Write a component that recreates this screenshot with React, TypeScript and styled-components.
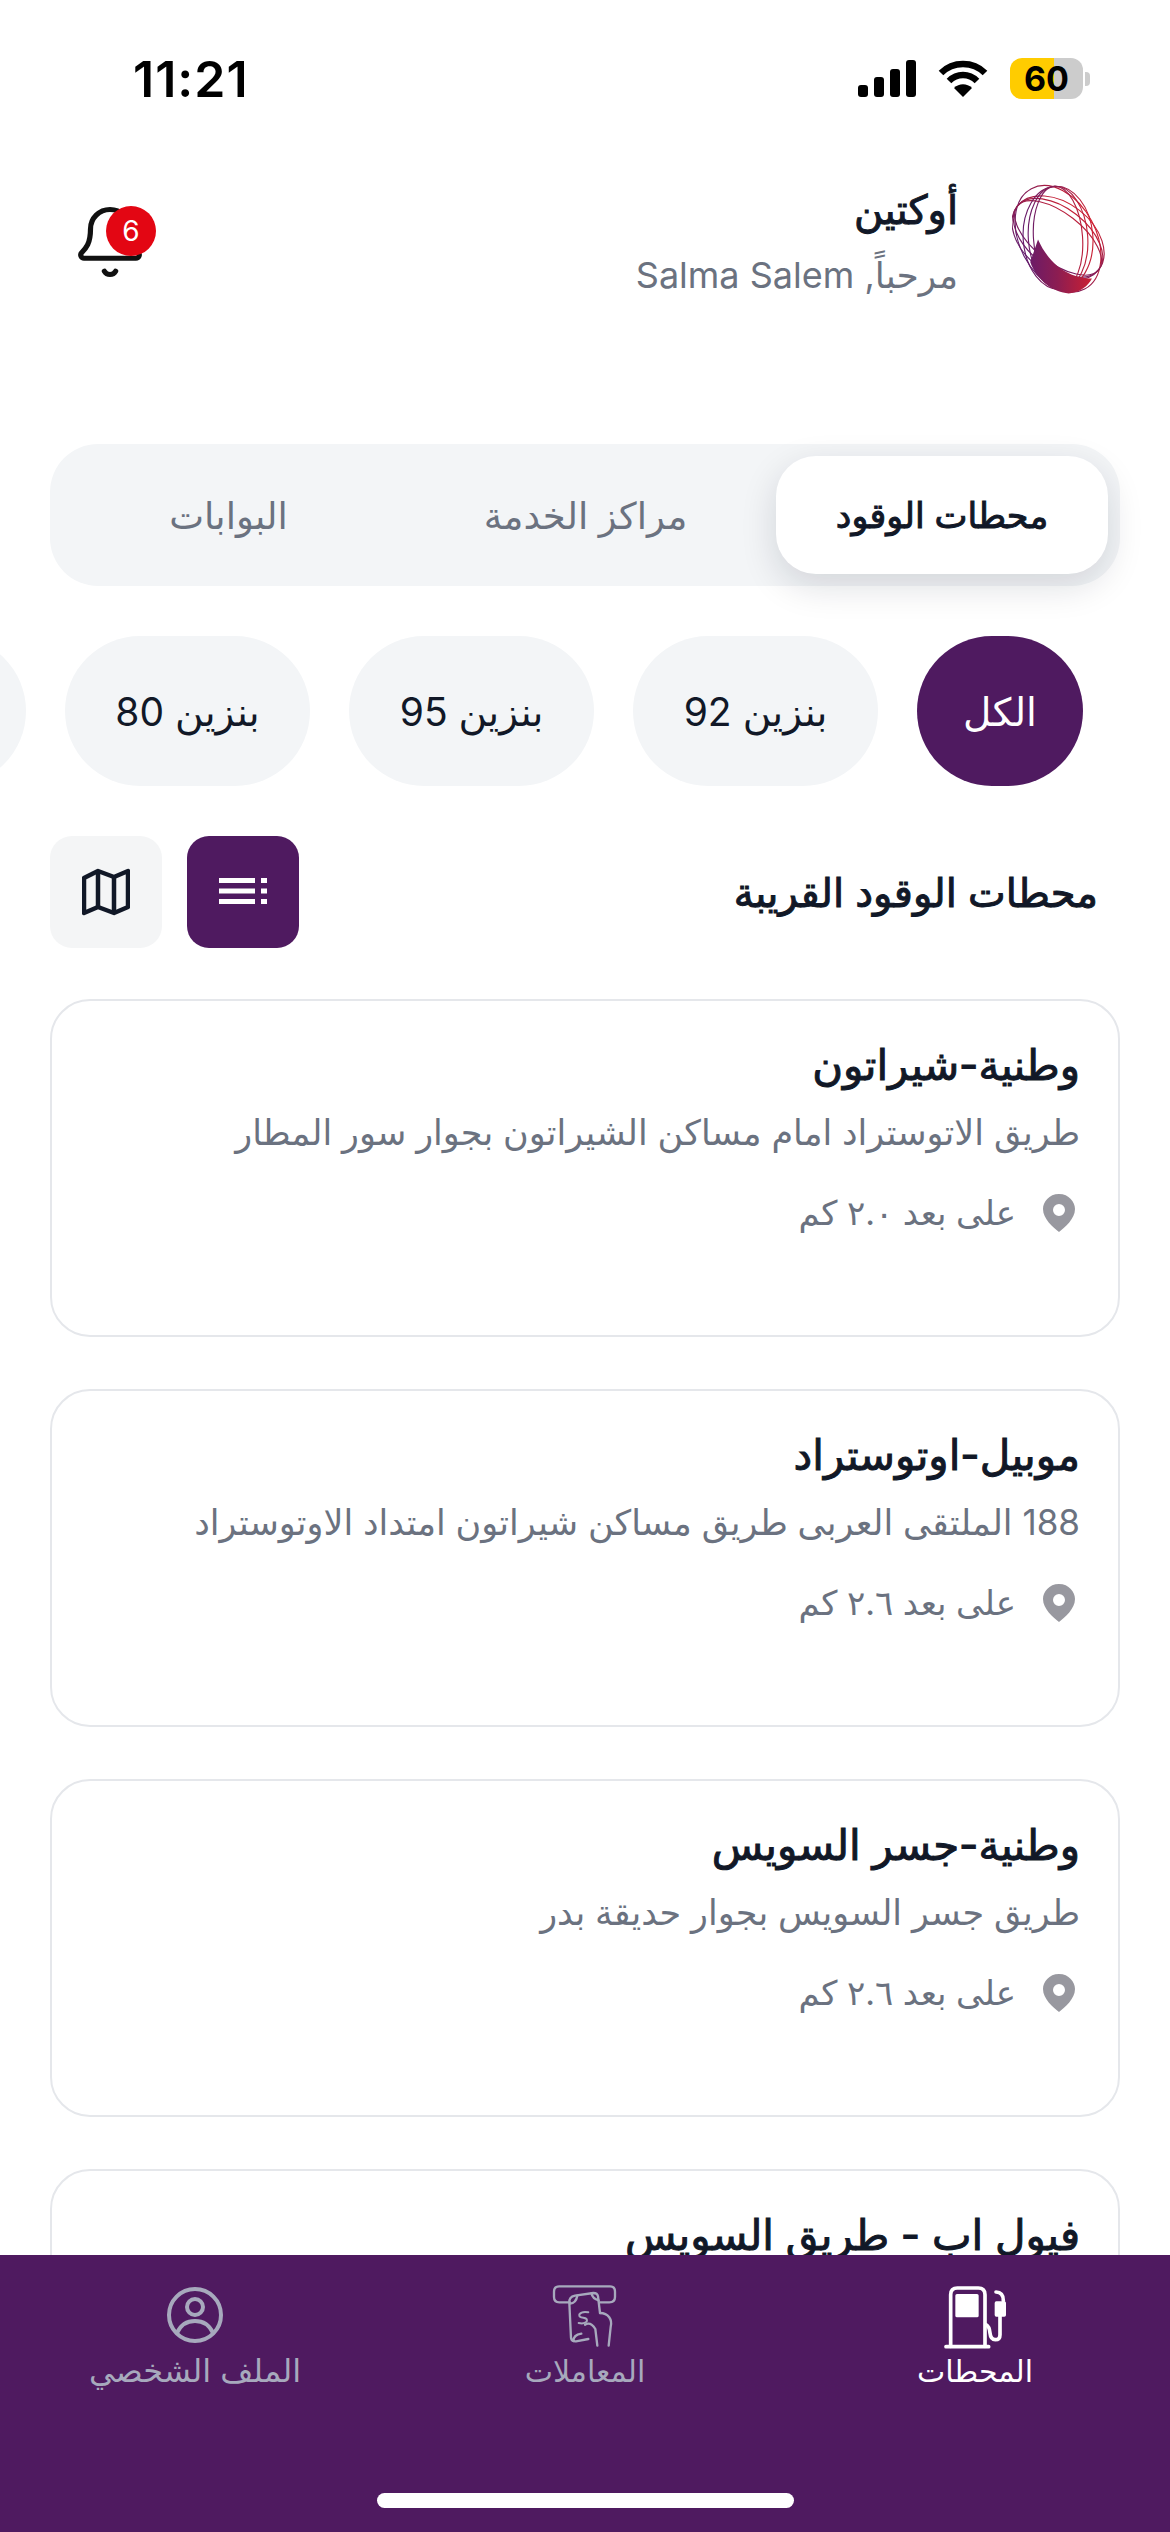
import styled, { createGlobalStyle, css } from 'styled-components';
import { Bell } from 'lucide-react';

const PURPLE = '#4f1a60';
const INK = '#111827';
const GRAY = '#6b7280';

const stations = [
  {
    name: 'وطنية-شيراتون',
    address: 'طريق الاتوستراد امام مساكن الشيراتون بجوار سور المطار',
    distance: 'على بعد ٢.٠ كم',
  },
  {
    name: 'موبيل-اوتوستراد',
    address: '188 الملتقى العربى طريق مساكن شيراتون امتداد الاوتوستراد',
    distance: 'على بعد ٢.٦ كم',
  },
  {
    name: 'وطنية-جسر السويس',
    address: 'طريق جسر السويس بجوار حديقة بدر',
    distance: 'على بعد ٢.٦ كم',
  },
  {
    name: 'فيول اب - طريق السويس',
    address: '',
    distance: '',
  },
];

const chips = ['الكل', 'بنزين 92', 'بنزين 95', 'بنزين 80'];

// DejaVu's real bold is far wider than the reference face, so thicken the regular cut
const heavyText = css`
  font-weight: 400;
  -webkit-text-stroke: 1px currentColor;
`;

const GlobalStyle = createGlobalStyle`
  html, body {
    margin: 0;
    padding: 0;
    background: #fff;
  }
  body {
    font-family: Inter, "DejaVu Sans", sans-serif;
  }
`;

const Screen = styled.div`
  width: 1170px;
  height: 2532px;
  display: flex;
  flex-direction: column;
  overflow: hidden;
  background: #fff;
  direction: rtl;
`;

const StatusBar = styled.div`
  direction: ltr;
  height: 157px;
  flex: none;
  padding: 0 80px 0 133px;
  box-sizing: border-box;
  display: flex;
  align-items: center;
  justify-content: space-between;
`;

const Clock = styled.span`
  font-size: 50px;
  font-weight: 600;
  color: #000;
  letter-spacing: 1px;
`;

const StatusIcons = styled.div`
  display: flex;
  align-items: center;
  gap: 22px;
`;

const Battery = styled.div`
  width: 73px;
  height: 41px;
  border-radius: 12px;
  overflow: hidden;
  background: linear-gradient(90deg, #ffcc00 0 44px, #cccccc 44px);
  display: flex;
  align-items: center;
  justify-content: center;
  font-size: 34px;
  font-weight: 700;
  color: #000;
`;

const BatteryWrap = styled.div`
  display: flex;
  align-items: center;
  gap: 2px;
`;

const BatteryNub = styled.div`
  width: 5px;
  height: 14px;
  border-radius: 0 4px 4px 0;
  background: #ccc;
`;

const Header = styled.header`
  flex: none;
  height: 155px;
  padding: 26px 64px 0 71px;
  box-sizing: border-box;
  display: flex;
  align-items: flex-start;
  justify-content: space-between;
`;

const Brand = styled.div`
  display: flex;
  align-items: flex-start;
  gap: 54px;
`;

const BrandText = styled.div`
  display: flex;
  flex-direction: column;
  gap: 16px;
`;

const BrandName = styled.div`
  ${heavyText};
  font-size: 40px;
  color: ${INK};
  line-height: 54px;
`;

const Greeting = styled.div`
  font-size: 36px;
  color: ${GRAY};
  line-height: 44px;
`;

const BellBox = styled.div`
  position: relative;
  width: 78px;
  height: 78px;
  margin-top: 20px;
  color: #111;
`;

const Badge = styled.span`
  position: absolute;
  top: 3px;
  right: -7px;
  width: 50px;
  height: 50px;
  border-radius: 50%;
  background: #e30613;
  color: #fff;
  font-size: 28px;
  display: flex;
  align-items: center;
  justify-content: center;
`;

const Tabs = styled.div`
  flex: none;
  margin: 132px 50px 0;
  height: 142px;
  padding: 12px;
  box-sizing: border-box;
  border-radius: 48px;
  background: #f3f5f7;
  display: flex;
`;

const Tab = styled.div<{ $active?: boolean }>`
  flex: ${(p) => (p.$active ? '0 0 332px' : '1')};
  padding-right: ${(p) => (p.$active ? '0' : '24px')};
  box-sizing: border-box;
  border-radius: 40px;
  display: flex;
  align-items: center;
  justify-content: center;
  font-size: 37px;
  color: ${GRAY};
  ${(p) =>
    p.$active &&
    css`
      ${heavyText};
      font-size: 35px;
      color: ${INK};
      background: #fff;
      box-shadow: 0 12px 36px rgba(17, 24, 39, 0.14);
    `}
`;

const ChipRow = styled.div`
  flex: none;
  margin-top: 50px;
  padding-right: 87px;
  display: flex;
  gap: 39px;
  overflow: hidden;
`;

const Chip = styled.div<{ $active?: boolean }>`
  flex: none;
  height: 150px;
  min-width: 166px;
  padding: 0 24px;
  box-sizing: border-box;
  border-radius: 75px;
  display: flex;
  align-items: center;
  justify-content: center;
  font-size: 39px;
  color: ${(p) => (p.$active ? '#fff' : INK)};
  background: ${(p) => (p.$active ? PURPLE : '#f3f5f7')};
  ${(p) =>
    !p.$active &&
    css`
      min-width: 245px;
    `}
`;

const SectionRow = styled.div`
  flex: none;
  margin-top: 50px;
  padding: 0 72px 0 50px;
  display: flex;
  align-items: center;
  justify-content: space-between;
`;

const SectionTitle = styled.h2`
  ${heavyText};
  margin: 0;
  font-size: 40px;
  color: ${INK};
`;

const ViewSwitch = styled.div`
  display: flex;
  gap: 25px;
`;

const ViewButton = styled.div<{ $active?: boolean }>`
  width: 112px;
  height: 112px;
  border-radius: 22px;
  display: flex;
  align-items: center;
  justify-content: center;
  background: ${(p) => (p.$active ? PURPLE : '#f4f5f6')};
`;

const CardList = styled.div`
  flex: 1;
  min-height: 0;
  margin-top: 51px;
  padding: 0 50px;
  display: flex;
  flex-direction: column;
  gap: 52px;
  overflow: hidden;
`;

const Card = styled.article`
  flex: none;
  height: 338px;
  box-sizing: border-box;
  padding: 34px 38px 0;
  border: 2px solid #e5e7eb;
  border-radius: 40px;
  background: #fff;
`;

const CardTitle = styled.h3`
  ${heavyText};
  margin: 0;
  font-size: 42px;
  line-height: 60px;
  color: ${INK};
`;

const CardAddress = styled.p`
  margin: 12px 0 0;
  min-height: 50px;
  font-size: 35px;
  line-height: 50px;
  color: ${GRAY};
`;

const CardDistance = styled.div`
  margin-top: 34px;
  padding-right: 3px;
  display: flex;
  align-items: center;
  gap: 25px;
  font-size: 34px;
  line-height: 44px;
  color: ${GRAY};
`;

const BottomNav = styled.nav`
  flex: none;
  height: 277px;
  background: ${PURPLE};
  display: flex;
  flex-direction: column;
`;

const NavItems = styled.div`
  display: grid;
  grid-template-columns: repeat(3, 1fr);
  padding-top: 28px;
`;

const NavItem = styled.div<{ $active?: boolean }>`
  display: flex;
  flex-direction: column;
  align-items: center;
  font-size: 32px;
  line-height: 36px;
  color: ${(p) => (p.$active ? '#fff' : '#a7a9bd')};
`;

const NavIcon = styled.div<{ $raised?: boolean }>`
  height: 70px;
  box-sizing: border-box;
  padding-top: ${(p) => (p.$raised ? '3px' : '0')};
  display: flex;
  align-items: ${(p) => (p.$raised ? 'flex-start' : 'center')};
`;

const NavLabel = styled.span<{ $narrow?: boolean }>`
  font-size: ${(p) => (p.$narrow ? '30px' : '32px')};
`;

const HomeBar = styled.div`
  width: 417px;
  height: 15px;
  margin: auto auto 24px;
  border-radius: 8px;
  background: #fff;
`;

const SignalIcon = () => (
  <svg width="58" height="37" viewBox="0 0 58 37" fill="#000">
    <rect x="0" y="25" width="10" height="12" rx="3" />
    <rect x="16" y="17" width="10" height="20" rx="3" />
    <rect x="32" y="9" width="10" height="28" rx="3" />
    <rect x="48" y="0" width="10" height="37" rx="3" />
  </svg>
);

const WifiIcon = () => (
  <svg width="50" height="37" viewBox="0 0 50 37" fill="none" stroke="#000" strokeWidth="6.5">
    <path d="M3 13 C15 1 35 1 47 13" />
    <path d="M11 21 C19 13 31 13 39 21" />
    <path d="M25 37 L16 28 C21 23 29 23 34 28 Z" fill="#000" stroke="none" />
  </svg>
);

const LogoMark = () => (
  <svg width="94" height="113" viewBox="90 70 290 350" fill="none">
    <defs>
      <linearGradient id="oct" gradientUnits="userSpaceOnUse" x1="100" y1="250" x2="360" y2="250">
        <stop offset="0" stopColor="#5a1a72" />
        <stop offset="0.5" stopColor="#8c1d52" />
        <stop offset="1" stopColor="#d8202c" />
      </linearGradient>
    </defs>
    <g stroke="url(#oct)" strokeWidth="3.5">
      <ellipse cx="232" cy="243" rx="118" ry="176" transform="rotate(-28 232 243)" />
      <ellipse cx="232" cy="240" rx="108" ry="160" transform="rotate(-52 232 240)" />
      <ellipse cx="232" cy="240" rx="92" ry="160" transform="rotate(-52 232 240)" />
      <ellipse cx="232" cy="240" rx="76" ry="160" transform="rotate(-52 232 240)" />
      <ellipse cx="232" cy="240" rx="108" ry="160" transform="rotate(-4 232 240)" />
      <ellipse cx="232" cy="240" rx="92" ry="160" transform="rotate(-4 232 240)" />
      <ellipse cx="232" cy="240" rx="76" ry="160" transform="rotate(-4 232 240)" />
    </g>
    <path
      d="M146 315 C165 372 220 410 265 412 C302 410 325 388 337 366 C280 366 210 335 170 245 Z"
      fill="url(#oct)"
    />
  </svg>
);

const PinIcon = () => (
  <svg width="36" height="40" viewBox="0 0 36 40">
    <path
      d="M18 1 C8 1 2 9 2 16 C2 26 12 34 18 39 C24 34 34 26 34 16 C34 9 28 1 18 1 Z M18 11 A6 6 0 1 1 18 23 A6 6 0 1 1 18 11 Z"
      fill="#98989f"
      fillRule="evenodd"
    />
  </svg>
);

const ListIcon = () => (
  <svg width="48" height="28" viewBox="0 0 48 28" fill="#fff">
    <rect x="0" y="0" width="36" height="5" />
    <rect x="0" y="10.5" width="36" height="5" />
    <rect x="0" y="21" width="36" height="5" />
    <rect x="42" y="0" width="6" height="5" />
    <rect x="42" y="10.5" width="6" height="5" />
    <rect x="42" y="21" width="6" height="5" />
  </svg>
);

const MapIcon = () => (
  <svg width="48" height="48" viewBox="0 0 48 48" fill="none" stroke={INK} strokeWidth="4.5" strokeLinejoin="round">
    <path d="M2 10 L16 3 L32 9 L46 3 V39 L32 45 L16 39 L2 45 Z" />
    <path d="M16 3 V39 M32 9 V45" />
  </svg>
);

const FuelIcon = () => (
  <svg width="70" height="70" viewBox="60 35 210 210" fill="none" stroke="#fff" strokeWidth="11" strokeLinecap="round">
    <path d="M92 225 V70 Q92 50 112 50 H175 Q195 50 195 70 V225" />
    <path d="M78 226 H206" />
    <rect x="106" y="68" width="70" height="70" rx="5" fill="#fff" stroke="none" />
    <path d="M228 62 Q250 62 250 88" />
    <rect x="224" y="90" width="34" height="46" rx="5" fill="#fff" stroke="none" />
    <path d="M240 135 V190 Q240 205 226 205 Q212 205 210 185 Q208 165 198 160" />
  </svg>
);

const TransactionsIcon = () => (
  <svg width="70" height="70" viewBox="90 40 210 210" fill="none" stroke="#a7a9bd" strokeWidth="7" strokeLinecap="round" strokeLinejoin="round">
    <path d="M150 98 H118 Q102 98 102 82 V66 Q102 50 118 50 H270 Q285 50 285 66 V82 Q285 98 268 98 H240" />
    <path d="M205 208 L168 215 Q155 216 153 205 L148 100 Q146 82 165 78 L220 70 Q232 70 234 80 L240 130" />
    <path d="M150 102 Q168 100 172 78 M160 214 Q160 196 184 192 M214 71 Q218 88 236 92" />
    <path d="M240 130 C265 130 278 150 272 172 L266 228" />
    <path d="M195 165 Q212 155 226 178 L232 228" />
    <path d="M205 128 Q186 124 178 134 Q176 144 190 144 Q204 146 200 156 Q192 164 176 160" strokeWidth="6" />
  </svg>
);

const ProfileIcon = () => (
  <svg width="58" height="58" viewBox="0 0 58 58" fill="none" stroke="#a7a9bd" strokeWidth="4">
    <circle cx="29" cy="29" r="26" />
    <circle cx="29" cy="21" r="8" />
    <path d="M11 47 C15 38 22 35 29 35 C36 35 43 38 47 47" />
  </svg>
);

export default function App() {
  return (
    <Screen>
      <GlobalStyle />
      <StatusBar>
        <Clock>11:21</Clock>
        <StatusIcons>
          <SignalIcon />
          <WifiIcon />
          <BatteryWrap>
            <Battery>60</Battery>
            <BatteryNub />
          </BatteryWrap>
        </StatusIcons>
      </StatusBar>

      <Header>
        <Brand>
          <LogoMark />
          <BrandText>
            <BrandName>أوكتين</BrandName>
            <Greeting>مرحباً, Salma Salem</Greeting>
          </BrandText>
        </Brand>
        <BellBox>
          <Bell size={78} strokeWidth={1.6} />
          <Badge>6</Badge>
        </BellBox>
      </Header>

      <Tabs>
        <Tab $active>محطات الوقود</Tab>
        <Tab>مراكز الخدمة</Tab>
        <Tab>البوابات</Tab>
      </Tabs>

      <ChipRow>
        {chips.map((chip, i) => (
          <Chip key={chip} $active={i === 0}>
            {chip}
          </Chip>
        ))}
        <Chip />
      </ChipRow>

      <SectionRow>
        <SectionTitle>محطات الوقود القريبة</SectionTitle>
        <ViewSwitch>
          <ViewButton $active>
            <ListIcon />
          </ViewButton>
          <ViewButton>
            <MapIcon />
          </ViewButton>
        </ViewSwitch>
      </SectionRow>

      <CardList>
        {stations.map((s) => (
          <Card key={s.name}>
            <CardTitle>{s.name}</CardTitle>
            <CardAddress>{s.address}</CardAddress>
            {s.distance && (
              <CardDistance>
                <PinIcon />
                <span>{s.distance}</span>
              </CardDistance>
            )}
          </Card>
        ))}
      </CardList>

      <BottomNav>
        <NavItems>
          <NavItem $active>
            <NavIcon>
              <FuelIcon />
            </NavIcon>
            <NavLabel $narrow>المحطات</NavLabel>
          </NavItem>
          <NavItem>
            <NavIcon>
              <TransactionsIcon />
            </NavIcon>
            <NavLabel $narrow>المعاملات</NavLabel>
          </NavItem>
          <NavItem>
            <NavIcon $raised>
              <ProfileIcon />
            </NavIcon>
            <NavLabel>الملف الشخصي</NavLabel>
          </NavItem>
        </NavItems>
        <HomeBar />
      </BottomNav>
    </Screen>
  );
}
